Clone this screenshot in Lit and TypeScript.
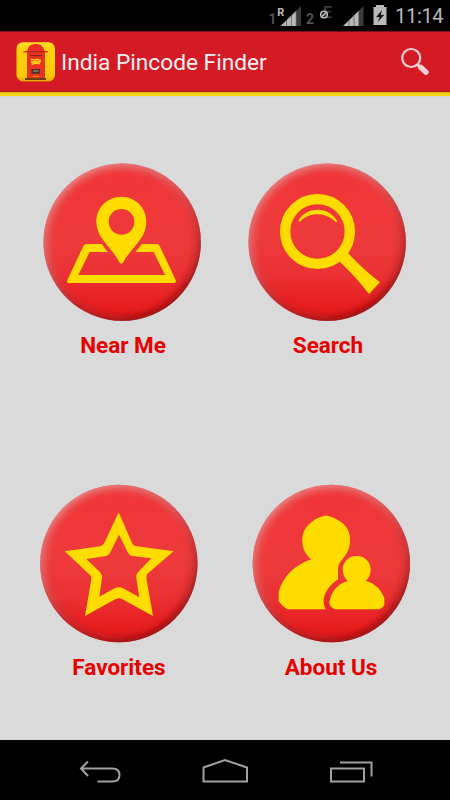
import { LitElement, html, svg, css } from "lit";
import type { SVGTemplateResult } from "lit";
import { customElement, property } from "lit/decorators.js";

type TileName = "near" | "search" | "favorites" | "about";

interface TileArt {
  label: string;
  viewBox: string;
  cx: number;
  cy: number;
  art: SVGTemplateResult;
}

const tiles: Record<TileName, TileArt> = {
  near: {
    label: "Near Me",
    viewBox: "36 21 480 480",
    cx: 276.5,
    cy: 261.5,
    art: svg`
      <path fill-rule="evenodd" d="M274 125C232 125 199 158 199 199C199 232 216 252 236 276C251 294 262 309 268 322Q274 330 280 322C286 309 298 294 313 276C334 252 349 232 349 199C349 158 316 125 274 125ZM274.500 162A38.500 38.500 0 1 1 274.500 239A38.500 38.500 0 1 1 274.500 162Z"/>
      <path fill-rule="evenodd" d="M170 267H216Q224 281 234 291H179L145 360H405L371 291H316Q326 281 335 267H380Q386 267 389 273L437 375Q440 384 433 384H117Q108 384 112 375L160 273Q163 267 170 267Z"/>`,
  },
  search: {
    label: "Search",
    viewBox: "36 21 480 480",
    cx: 276.5,
    cy: 261.5,
    art: svg`
      <circle cx="247.500" cy="229.500" r="97" fill="none" stroke="#ffdc00" stroke-width="31"/>
      <path d="M311 317Q327 308 337 292Q385 344 435 382L402 417Q362 364 311 317Z"/>
      <path d="M190 196C205 173 226 164 248 164C271 164 292 174 307 198L303 202C288 187 269 178 247 178C226 178 209 186 194 201Z"/>`,
  },
  favorites: {
    label: "Favorites",
    viewBox: "27 24 480 480",
    cx: 266.5,
    cy: 265.5,
    art: svg`
      <path fill-rule="evenodd" d="M266 112L306 203Q310 213 320 214L431 229L354 295Q348 300 349 309L369 423L276 372Q267 367 257 372L165 423L184 313Q186 305 180 300L104 229L210 214Q220 212 224 202ZM267 179L241 232Q236 242 224 244L169 252L209 290Q217 298 216 308L208 365L251 341Q266 333 282 341L328 367L319 309Q317 299 325 290L364 250L307 243Q298 242 293 232Z"/>`,
  },
  about: {
    label: "About Us",
    viewBox: "48 24 480 480",
    cx: 289,
    cy: 265.5,
    art: svg`
      <path d="M264 124Q273 119 282 124C312 132 345 155 345 190V202C344 223 334 239 322 253C313 264 309 272 309 284V313C288 328 264 352 266 382Q267 394 272 403H157Q143 396 131 379V351C145 302 180 270 229 253C213 240 202 220 202 200V190C203 159 232 132 264 124Z"/>
      <path d="M365 243C390 243 407 261 407 284C407 298 401 310 392 317C421 325 441 346 448 370V390Q443 400 432 403H300Q283 397 283 382C288 350 309 325 338 318C329 309 323 298 323 284C323 261 341 243 365 243Z"/>`,
  },
};

@customElement("round-tile")
class RoundTile extends LitElement {
  @property() name: TileName = "near";

  static styles = css`
    :host { display: flex; flex-direction: column; align-items: center; width: 160px; }
    .disc { display: block; width: 160px; height: 160px; }
    .label {
      margin-top: var(--label-gap, 9px);
      padding-left: var(--label-shift, 2px);
      font: 700 22.5px/28px Roboto, sans-serif;
      color: #e60000;
      white-space: nowrap;
    }
  `;

  render() {
    const t = tiles[this.name];
    return html`
      <svg class="disc" viewBox=${t.viewBox}>
        <defs>
          <linearGradient id="base" x1="0" y1="0" x2="0" y2="1">
            <stop offset="0" stop-color="#f03436"/>
            <stop offset="0.5" stop-color="#ee3a3b"/>
            <stop offset="0.72" stop-color="#ea3032"/>
            <stop offset="0.9" stop-color="#e91e20"/>
            <stop offset="1" stop-color="#e41a1c"/>
          </linearGradient>
          <linearGradient id="edge" x1="0.2" y1="0.05" x2="0.75" y2="0.95">
            <stop offset="0" stop-color="#e99c9c"/>
            <stop offset="0.35" stop-color="#d87678"/>
            <stop offset="0.65" stop-color="#a83034" stop-opacity="0.8"/>
            <stop offset="1" stop-color="#780808"/>
          </linearGradient>
          <filter id="soft" x="-20%" y="-20%" width="140%" height="140%">
            <feGaussianBlur stdDeviation="15"/>
          </filter>
          <clipPath id="round"><circle cx=${t.cx} cy=${t.cy} r="236.500"/></clipPath>
        </defs>
        <circle cx=${t.cx} cy=${t.cy} r="236" fill="url(#base)"/>
        <g clip-path="url(#round)">
          <circle cx=${t.cx} cy=${t.cy} r="245" fill="none" stroke="url(#edge)"
            stroke-width="34" filter="url(#soft)"/>
        </g>
        <g fill="#ffdc00">${t.art}</g>
      </svg>
      <span class="label">${t.label}</span>
    `;
  }
}

@customElement("status-bar")
class StatusBar extends LitElement {
  static styles = css`
    :host { display: flex; height: 31px; background: #000; justify-content: flex-end; }
    .signals { width: 145px; height: 31px; flex: none; }
    .clock {
      width: 55px;
      font: 400 20px/33px Roboto, sans-serif;
      letter-spacing: -0.3px;
      color: #b9b9b9;
      white-space: nowrap;
    }
    .sim { font: 700 14px Roboto, sans-serif; fill: #505050; }
    .roam { font: 700 10.5px Roboto, sans-serif; fill: #bdbdbd; }
    .edge { font: 500 16px Roboto, sans-serif; fill: #3c3c3c; }
  `;

  render() {
    const signal = (x: number) => svg`
      <path fill="#b9b9b9" d="M${x} 26L${x + 16} 10.500V26Z"/>
      <path fill="#3b3b3b" d="M${x + 16} 10.500L${x + 20.5} 6V26H${x + 16}Z"/>
      <path stroke="#555" stroke-width=".7" d="M${x + 6} 20V26M${x + 11} 15V26M${x + 15.7} 11V26"/>`;
    return html`
      <svg class="signals" viewBox="250 0 145 31">
        <text class="sim" x="268.500" y="23.500">1</text>
        <text class="roam" x="277.300" y="15.500" textLength="7" lengthAdjust="spacingAndGlyphs">R</text>
        ${signal(280.5)}
        <text class="sim" x="306" y="23.500">2</text>
        <text class="edge" x="323" y="17.500">E</text>
        <circle cx="324" cy="14.500" r="3.400" fill="#333" stroke="#c8c8c8" stroke-width="1.300"/>
        <path d="M321.800 16.500L326.500 12.500" stroke="#c8c8c8" stroke-width="1.300"/>
        ${signal(343)}
        <path fill="#b9b9b9" d="M373.500 7H376V5H384V7H386.500V25H373.500Z"/>
        <path fill="#111" d="M382 10L376 17.200L379.800 17L377.600 22.200L384.300 14.700L380.700 15Z"/>
      </svg>
      <span class="clock">11:14</span>
    `;
  }
}

@customElement("app-root")
class AppRoot extends LitElement {
  static styles = css`
    :host {
      display: flex;
      flex-direction: column;
      width: 450px;
      height: 800px;
      background: #dadada;
      overflow: hidden;
    }
    .header {
      box-sizing: border-box;
      height: 61px;
      display: flex;
      align-items: center;
      padding: 0 16px;
      background: #d31a25;
      border-top: 1px solid #7d1217;
      border-bottom: 1px solid #ad1a17;
    }
    .logo { width: 40px; height: 40px; flex: none; }
    .title {
      flex: 1;
      margin-left: 5px;
      padding-top: 2px;
      font: 400 22.7px/30px Roboto, sans-serif;
      color: #fff0f1;
      white-space: nowrap;
    }
    .find { width: 32px; height: 32px; flex: none; margin-right: 2px; }
    .stripe { height: 4px; background: linear-gradient(#d5b414, #f2cf12 40%, #f6d60c); }
    .grid {
      flex: 1;
      display: flex;
      flex-direction: column;
      background: linear-gradient(#d2d2d2, #dadada 3px);
    }
    .row { display: flex; height: 321px; box-sizing: border-box; padding-top: 66px; }
    .upper { padding-left: 42px; gap: 45px; }
    .lower { padding-left: 39px; gap: 52px; --label-gap: 10px; --label-shift: 0px; }
    .nav { height: 60px; background: #000; flex: none; }
    .keys { display: block; width: 450px; height: 60px; }
  `;

  render() {
    return html`
      <status-bar></status-bar>
      <header class="header">
        <svg class="logo" viewBox="16 42 40 40">
          <defs>
            <linearGradient id="gold" x1="0" y1="0" x2="0" y2="1">
              <stop offset="0" stop-color="#ffe22e"/>
              <stop offset=".15" stop-color="#ffd20a"/>
              <stop offset=".85" stop-color="#fbc908"/>
              <stop offset="1" stop-color="#e3a50a"/>
            </linearGradient>
          </defs>
          <rect x="16.500" y="42.200" width="38.500" height="39.300" rx="6.500" fill="url(#gold)"/>
          <path fill="#e8321f" d="M27 51V78H45V51Z"/>
          <path fill="#ed2d25" d="M27.500 50.500C28 46 31.500 44 35.700 44S43.500 46 44 50.500L48.500 51.500L47.500 52.500H24L23 51.500Z"/>
          <path fill="#a92d16" d="M27 51H44.500V52.300H27Z"/>
          <path fill="#7d2412" d="M30 55H42V56.200H30Z"/>
          <path fill="none" stroke="#ffc91d" stroke-width="1.700" d="M30.500 59.500L35 60L37 59.500M37 59.300L40.500 60.500M31 62.200L41 61.500M31.500 64.200L36 63L40 63.700"/>
          <path fill="#49302a" d="M31.500 69H39.800V73.700H31.500Z"/>
          <path stroke="#b4a294" d="M33 71H38.500"/>
          <path stroke="#f49a1c" stroke-width="1" d="M32.500 76.300H39"/>
          <path fill="#6f3b14" d="M25 78H46V80H25Z"/>
        </svg>
        <span class="title">India Pincode Finder</span>
        <svg class="find" viewBox="400 46 32 32">
          <circle cx="411.200" cy="58" r="9" fill="none" stroke="#f9cfd3" stroke-width="2.200"/>
          <path stroke="#f9cfd3" stroke-width="3" d="M417 64L420.500 67.500"/>
          <path stroke="#f9cfd3" stroke-width="5.400" stroke-linecap="round" d="M420.700 67.300L426 72.200"/>
        </svg>
      </header>
      <div class="stripe"></div>
      <main class="grid">
        <div class="row upper">
          <round-tile name="near"></round-tile>
          <round-tile name="search"></round-tile>
        </div>
        <div class="row lower">
          <round-tile name="favorites"></round-tile>
          <round-tile name="about"></round-tile>
        </div>
      </main>
      <nav class="nav">
        <svg class="keys" viewBox="0 740 450 60" fill="none" stroke="#a0a0a0" stroke-width="2">
          <path d="M88 761.500L81 768.500L88 776M81 768.500H112.500C117.500 768.500 119.500 771.500 119.500 775C119.500 779 117.500 781.500 112.500 781.500H97.500"/>
          <path d="M203.500 767.500L225 760L247 767.500V781.500H203.500Z"/>
          <path d="M331 768.500H364V781.500H331ZM340 762.500H371.500V776.500"/>
        </svg>
      </nav>
    `;
  }
}
